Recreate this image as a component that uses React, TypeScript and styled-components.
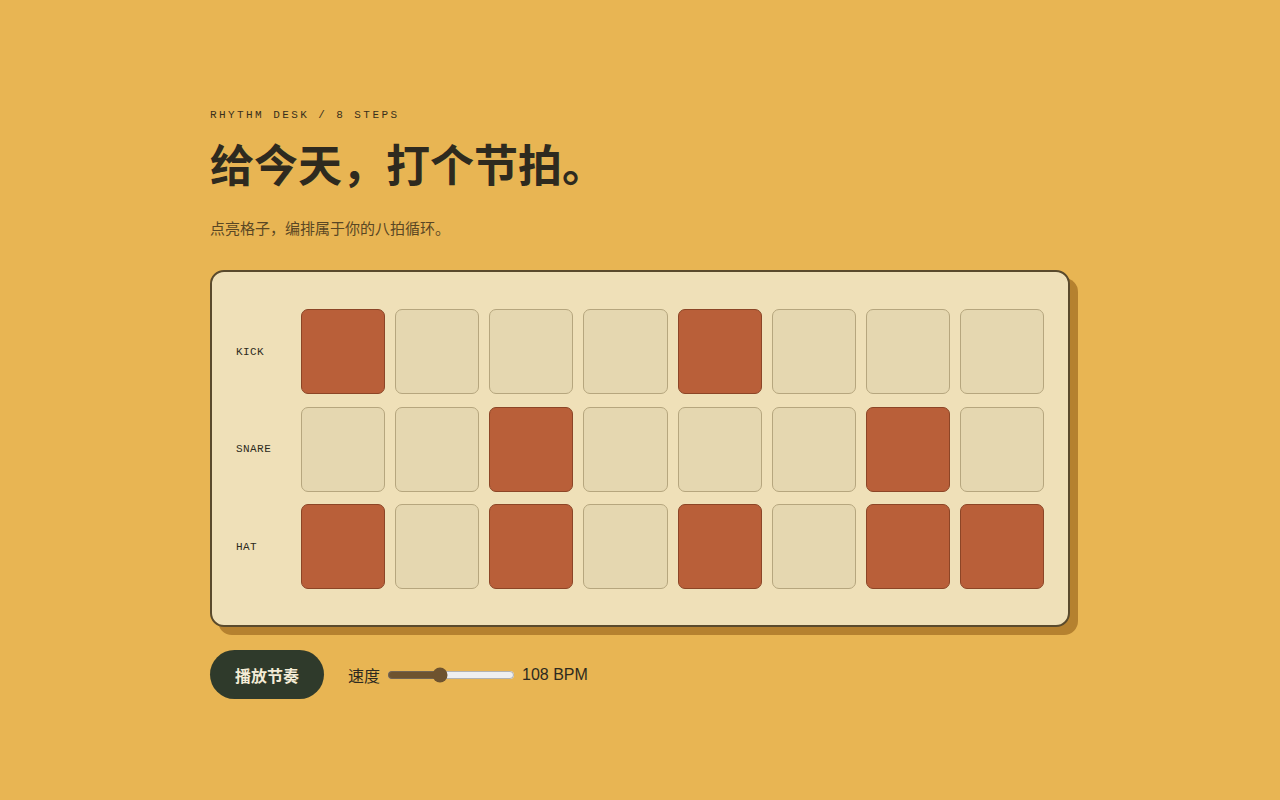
import React, { useState } from 'react';
import styled, { createGlobalStyle } from 'styled-components';

const GlobalStyle = createGlobalStyle`
    html, body {
        margin: 0;
        padding: 0;
        background: #e8b553;
    }
    body {
        font-family: 'Noto Sans CJK SC', 'Noto Sans', sans-serif;
        color: #2d2a20;
    }
`;

const Page = styled.main`
    width: 860px;
    margin: 0 auto;
    padding-top: 108px;
`;

const Eyebrow = styled.div`
    font-family: 'Liberation Mono', 'Courier New', monospace;
    font-size: 11px;
    letter-spacing: 0.22em;
    line-height: 14px;
    color: #3a2f1c;
`;

const Title = styled.h1`
    margin: 13px 0 0;
    font-size: 44px;
    line-height: 56px;
    font-weight: 700;
    color: #2e2a1f;
`;

const Lead = styled.p`
    margin: 26px 0 0;
    font-size: 15px;
    line-height: 22px;
    color: #5a4724;
`;

const Board = styled.section`
    margin-top: 31px;
    background: #efe0b8;
    border: 2px solid #5a4a2c;
    border-radius: 14px;
    box-shadow: 8px 8px 0 #b5812f;
    padding: 37px 24px 36px;
    display: grid;
    grid-template-columns: 55px repeat(8, 1fr);
    column-gap: 10px;
    row-gap: 12.5px;
    align-items: center;
`;

const TrackLabel = styled.span`
    font-family: 'Liberation Mono', 'Courier New', monospace;
    font-size: 11px;
    letter-spacing: 0.04em;
    color: #2d2a20;
`;

const Cell = styled.button<{ $on: boolean }>`
    width: 100%;
    height: 85px;
    padding: 0;
    border-radius: 7px;
    cursor: pointer;
    background: ${(p) => (p.$on ? '#b95f39' : '#e5d7b0')};
    border: 1px solid ${(p) => (p.$on ? '#8c4526' : '#b6a67e')};
`;

const Controls = styled.div`
    margin-top: 23px;
    display: flex;
    align-items: center;
    gap: 24px;
`;

const PlayButton = styled.button`
    height: 49px;
    padding: 0 25px;
    border: none;
    border-radius: 25px;
    background: #2f3a2b;
    color: #f4ecd6;
    font-family: 'Noto Sans CJK SC', 'Noto Sans', sans-serif;
    font-size: 16px;
    font-weight: 700;
    cursor: pointer;
`;

const Tempo = styled.label`
    display: flex;
    align-items: center;
    gap: 7px;
    font-size: 16px;
    color: #2d2a20;
`;

const Slider = styled.input`
    width: 128px;
    margin: 0;
    accent-color: #6e532f;
`;

const Bpm = styled.span`
    font-family: 'Liberation Sans', 'Noto Sans CJK SC', sans-serif;
    font-size: 16px;
`;

const TRACKS = ['KICK', 'SNARE', 'HAT'];

const INITIAL = [
    [1, 0, 0, 0, 1, 0, 0, 0],
    [0, 0, 1, 0, 0, 0, 1, 0],
    [1, 0, 1, 0, 1, 0, 1, 1],
];

export default function App() {
    const [pattern, setPattern] = useState(INITIAL);
    const [bpm, setBpm] = useState(108);

    const toggle = (row: number, step: number) => {
        setPattern((prev) =>
            prev.map((r, i) =>
                i === row ? r.map((v, j) => (j === step ? 1 - v : v)) : r
            )
        );
    };

    return (
        <>
            <GlobalStyle />
            <Page>
                <Eyebrow>RHYTHM DESK / 8 STEPS</Eyebrow>
                <Title>给今天，打个节拍。</Title>
                <Lead>点亮格子，编排属于你的八拍循环。</Lead>

                <Board>
                    {TRACKS.map((name, row) => (
                        <React.Fragment key={name}>
                            <TrackLabel>{name}</TrackLabel>
                            {pattern[row].map((on, step) => (
                                <Cell
                                    key={step}
                                    $on={on === 1}
                                    aria-label={`${name} ${step + 1}`}
                                    onClick={() => toggle(row, step)}
                                />
                            ))}
                        </React.Fragment>
                    ))}
                </Board>

                <Controls>
                    <PlayButton>播放节奏</PlayButton>
                    <Tempo>
                        速度
                        <Slider
                            type="range"
                            min={60}
                            max={180}
                            value={bpm}
                            onChange={(e) => setBpm(Number(e.target.value))}
                        />
                        <Bpm>{bpm} BPM</Bpm>
                    </Tempo>
                </Controls>
            </Page>
        </>
    );
}
